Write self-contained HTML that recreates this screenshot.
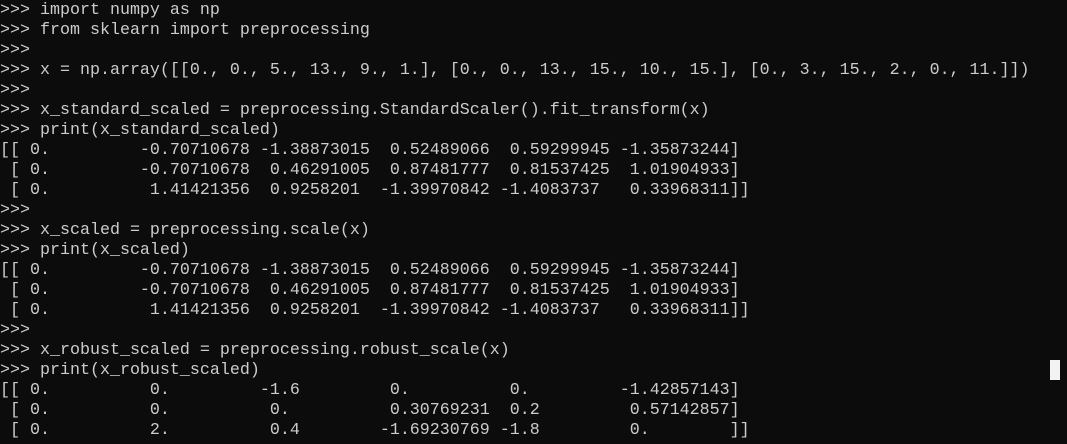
<!DOCTYPE html>
<html><head><meta charset="utf-8"><style>
html,body{margin:0;padding:0;background:#0c0c0c;width:1067px;height:444px;overflow:hidden}
pre{margin:0;padding:1px 0 0 0;font-family:"Liberation Mono",monospace;font-size:16.67px;line-height:20px;color:#cccccc;white-space:pre}
#cur{position:absolute;left:1050px;top:360px;width:10px;height:20px;background:#f2f2f2}
</style></head><body>
<pre>&gt;&gt;&gt; import numpy as np
&gt;&gt;&gt; from sklearn import preprocessing
&gt;&gt;&gt;
&gt;&gt;&gt; x = np.array([[0., 0., 5., 13., 9., 1.], [0., 0., 13., 15., 10., 15.], [0., 3., 15., 2., 0., 11.]])
&gt;&gt;&gt;
&gt;&gt;&gt; x_standard_scaled = preprocessing.StandardScaler().fit_transform(x)
&gt;&gt;&gt; print(x_standard_scaled)
[[ 0.         -0.70710678 -1.38873015  0.52489066  0.59299945 -1.35873244]
 [ 0.         -0.70710678  0.46291005  0.87481777  0.81537425  1.01904933]
 [ 0.          1.41421356  0.9258201  -1.39970842 -1.4083737   0.33968311]]
&gt;&gt;&gt;
&gt;&gt;&gt; x_scaled = preprocessing.scale(x)
&gt;&gt;&gt; print(x_scaled)
[[ 0.         -0.70710678 -1.38873015  0.52489066  0.59299945 -1.35873244]
 [ 0.         -0.70710678  0.46291005  0.87481777  0.81537425  1.01904933]
 [ 0.          1.41421356  0.9258201  -1.39970842 -1.4083737   0.33968311]]
&gt;&gt;&gt;
&gt;&gt;&gt; x_robust_scaled = preprocessing.robust_scale(x)
&gt;&gt;&gt; print(x_robust_scaled)
[[ 0.          0.         -1.6         0.          0.         -1.42857143]
 [ 0.          0.          0.          0.30769231  0.2         0.57142857]
 [ 0.          2.          0.4        -1.69230769 -1.8         0.        ]]</pre>
<div id="cur"></div>
</body></html>
